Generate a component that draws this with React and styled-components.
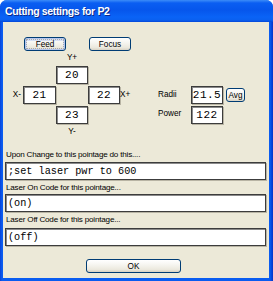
import React from 'react';
import styled, { createGlobalStyle } from 'styled-components';

const GlobalStyle = createGlobalStyle`
  html, body {
    margin: 0;
    padding: 0;
    background: #ffffff;
    overflow: hidden;
  }
`;

const Window = styled.div`
  width: 273px;
  height: 281px;
  display: flex;
  flex-direction: column;
  background: linear-gradient(to right, #0842d8 0, #0a5cf0 2px, #0a5cf0 270px, #0634c8 273px);
  border-radius: 7px 7px 0 0;
  overflow: hidden;
  box-sizing: border-box;
`;

const TitleBar = styled.div`
  height: 22px;
  flex: 0 0 22px;
  display: flex;
  align-items: center;
  padding-left: 5px;
  background: linear-gradient(
    to bottom,
    #3c8cf8 0,
    #0a5ef2 3px,
    #0656ec 10px,
    #0a63f6 17px,
    #0a60f0 20px,
    #0446d8 22px
  );
  color: #ffffff;
  font-family: "Liberation Sans", Arial, sans-serif;
  font-weight: bold;
  font-size: 10.5px;
  letter-spacing: -0.35px;
  text-shadow: 1px 1px 0 #0a2a8a;
`;

const Body = styled.div`
  flex: 1;
  margin: 0 4px 3px 3px;
  padding: 0 3px 0 2px;
  background: #ece9d8;
  display: flex;
  flex-direction: column;
  font-family: "Liberation Sans", Arial, sans-serif;
  font-size: 8.2px;
  color: #000000;
`;

const ButtonRow = styled.div`
  display: flex;
  gap: 23px;
  margin: 15px 0 0 19px;
`;

const XpButton = styled.button`
  box-sizing: border-box;
  width: ${({ $w }) => $w}px;
  height: ${({ $h }) => $h || 14}px;
  padding: 0;
  margin: 0;
  border: 1px solid #003c74;
  border-radius: 3px;
  background: linear-gradient(to bottom, #ffffff 0%, #f6f5f0 40%, #ebe8dd 80%, #d8d2c4 100%);
  font-family: "Liberation Sans", Arial, sans-serif;
  font-size: 8.2px;
  color: #000000;
  display: flex;
  align-items: center;
  justify-content: center;
  box-shadow: ${({ $focused }) =>
    $focused ? 'inset 0 0 0 1px #b4c6ee, inset 0 1px 0 2px #d6dff4' : 'none'};
  outline: ${({ $focused }) => ($focused ? '1px dotted #a8a8a8' : 'none')};
  outline-offset: -3px;
`;

const Middle = styled.div`
  display: flex;
  margin-top: 1px;
`;

const CrossGrid = styled.div`
  display: grid;
  grid-template-columns: 11px 33px 32px 32px 14px;
  grid-template-rows: 12px 18px 18px 18px 12px;
  row-gap: 2px;
  margin-left: 7px;
`;

const AxisLabel = styled.div`
  grid-column: ${({ $col }) => $col};
  grid-row: ${({ $row }) => $row};
  display: flex;
  align-items: center;
  justify-content: ${({ $align }) => $align || 'center'};
  padding-right: ${({ $align }) => ($align === 'flex-end' ? '2px' : '0')};
  line-height: 1;
`;

const NumBox = styled.div`
  grid-column: ${({ $col }) => $col};
  grid-row: ${({ $row }) => $row};
  box-sizing: border-box;
  height: 18px;
  background: #ffffff;
  border: 1px solid #3c3c3c;
  box-shadow: inset 1px 1px 0 #8a8a8a, 1px 1px 0 #b8b4a4;
  display: flex;
  align-items: center;
  justify-content: center;
  font-family: "Liberation Mono", "Courier New", monospace;
  font-size: 11px;
  letter-spacing: 0.5px;
`;

const SidePanel = styled.div`
  display: grid;
  grid-template-columns: 33px 32px 22px;
  grid-template-rows: 18px 19px;
  row-gap: 1px;
  align-content: start;
  align-items: center;
  margin: 34px 0 0 24px;
`;

const SideLabel = styled.div`
  line-height: 1;
`;

const AvgWrap = styled.div`
  padding-left: 3px;
  display: flex;
`;

const FieldLabel = styled.div`
  height: 12px;
  line-height: 12px;
  margin-top: ${({ $mt }) => $mt}px;
  padding-left: 1px;
  font-size: 8.1px;
  letter-spacing: -0.2px;
`;

const CodeBox = styled.div`
  box-sizing: border-box;
  height: 18px;
  margin-top: ${({ $mt }) => $mt}px;
  background: #ffffff;
  border: 1px solid #3c3c3c;
  box-shadow: inset 1px 1px 0 #8a8a8a, 1px 1px 0 #b8b4a4;
  display: flex;
  align-items: center;
  padding-left: 2px;
  font-family: "Liberation Mono", "Courier New", monospace;
  font-size: 10.2px;
  white-space: pre;
`;

const Footer = styled.div`
  display: flex;
  justify-content: center;
  margin-top: 13px;
  padding-right: 4px;
`;

export default function App() {
  return (
    <>
      <GlobalStyle />
      <Window>
        <TitleBar>Cutting settings for P2</TitleBar>
        <Body>
          <ButtonRow>
            <XpButton $w={42} $focused>Feed</XpButton>
            <XpButton $w={42}>Focus</XpButton>
          </ButtonRow>

          <Middle>
            <CrossGrid>
              <AxisLabel $col={3} $row={1}>Y+</AxisLabel>
              <NumBox $col={3} $row={2}>20</NumBox>
              <AxisLabel $col={1} $row={3} $align="flex-end">X-</AxisLabel>
              <NumBox $col={2} $row={3}>21</NumBox>
              <NumBox $col={4} $row={3}>22</NumBox>
              <AxisLabel $col={5} $row={3} $align="flex-start">X+</AxisLabel>
              <NumBox $col={3} $row={4}>23</NumBox>
              <AxisLabel $col={3} $row={5}>Y-</AxisLabel>
            </CrossGrid>

            <SidePanel>
              <SideLabel>Radii</SideLabel>
              <NumBox>21.5</NumBox>
              <AvgWrap>
                <XpButton $w={22}>Avg</XpButton>
              </AvgWrap>
              <SideLabel>Power</SideLabel>
              <NumBox>122</NumBox>
            </SidePanel>
          </Middle>

          <FieldLabel $mt={11}>Upon Change to this pointage do this....</FieldLabel>
          <CodeBox $mt={1}>;set laser pwr to 600</CodeBox>
          <FieldLabel $mt={2}>Laser On Code for this pointage...</FieldLabel>
          <CodeBox $mt={0}>(on)</CodeBox>
          <FieldLabel $mt={2}>Laser Off Code for this pointage...</FieldLabel>
          <CodeBox $mt={2}>(off)</CodeBox>

          <Footer>
            <XpButton $w={95}>OK</XpButton>
          </Footer>
        </Body>
      </Window>
    </>
  );
}
